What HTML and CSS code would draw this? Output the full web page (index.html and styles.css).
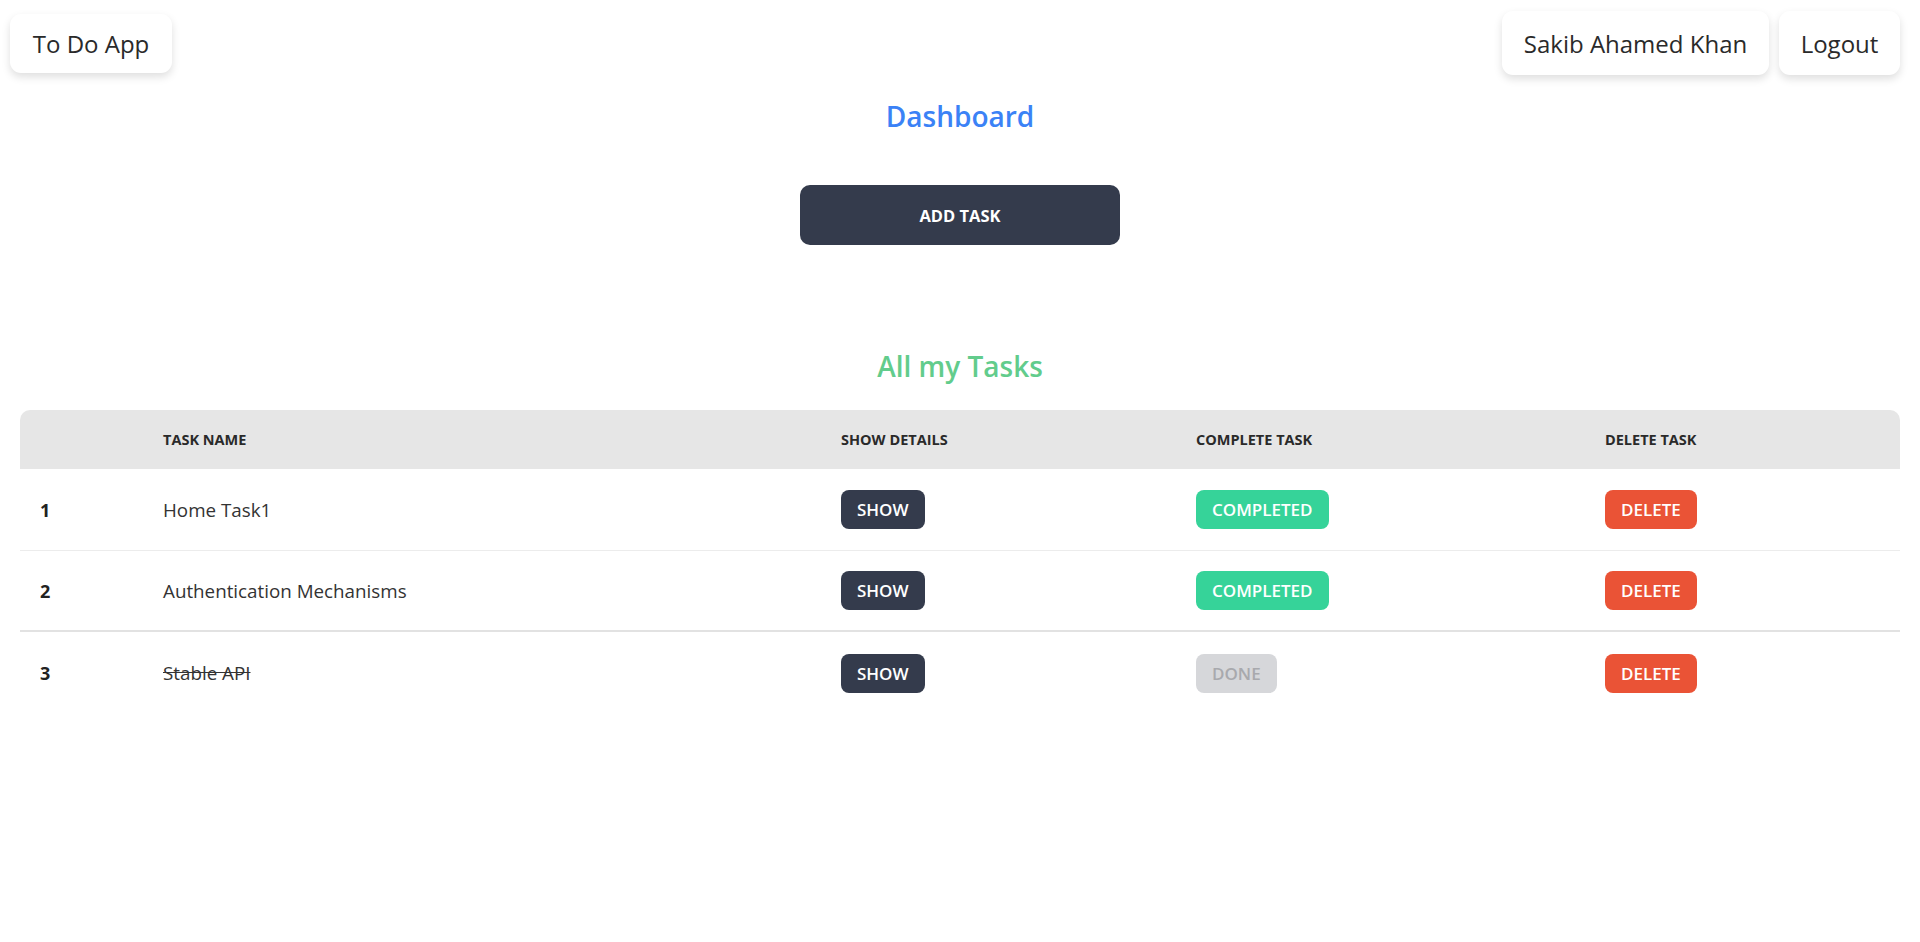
FILE: index.html
```html
<!DOCTYPE html>
<html lang="en">
<head>
<meta charset="utf-8">
<title>To Do App</title>
<link rel="stylesheet" href="styles.css">
</head>
<body>
<header class="navbar">
  <a class="nav-card brand">To Do App</a>
  <div class="nav-right">
    <a class="nav-card user">Sakib Ahamed Khan</a>
    <a class="nav-card">Logout</a>
  </div>
</header>
<main>
  <h1 class="title-dashboard">Dashboard</h1>
  <div class="add-wrap"><button class="btn-add">ADD TASK</button></div>
  <h2 class="title-tasks">All my Tasks</h2>
  <table class="tasks">
    <colgroup>
      <col class="c1"><col class="c2"><col class="c3"><col class="c4"><col class="c5">
    </colgroup>
    <thead>
      <tr><th></th><th>Task Name</th><th>Show Details</th><th>Complete Task</th><th>Delete Task</th></tr>
    </thead>
    <tbody>
      <tr class="row-a">
        <td class="num">1</td><td class="name">Home Task1</td>
        <td><button class="btn btn-dark">SHOW</button></td>
        <td><button class="btn btn-green">COMPLETED</button></td>
        <td><button class="btn btn-red">DELETE</button></td>
      </tr>
      <tr class="row-b">
        <td class="num">2</td><td class="name">Authentication Mechanisms</td>
        <td><button class="btn btn-dark">SHOW</button></td>
        <td><button class="btn btn-green">COMPLETED</button></td>
        <td><button class="btn btn-red">DELETE</button></td>
      </tr>
      <tr class="row-c">
        <td class="num">3</td><td class="name done">Stable API</td>
        <td><button class="btn btn-dark">SHOW</button></td>
        <td><button class="btn btn-disabled">DONE</button></td>
        <td><button class="btn btn-red">DELETE</button></td>
      </tr>
    </tbody>
  </table>
</main>
</body>
</html>
```
FILE: styles.css
```css
* { box-sizing: border-box; }
body {
  margin: 0;
  background: #ffffff;
  font-family: "Open Sans", "Noto Sans", sans-serif;
  color: #2a2a2a;
}
.navbar {
  display: flex;
  justify-content: space-between;
  align-items: flex-start;
  padding: 11px 20px 0 10px;
}
.nav-right { display: flex; gap: 10px; }
.nav-card {
  display: flex;
  align-items: center;
  justify-content: center;
  height: 64px;
  padding: 0 12px;
  background: #fff;
  border-radius: 11px;
  box-shadow: 0 4px 9px rgba(0,0,0,0.13);
  font-size: 24px;
  font-weight: 500;
  color: #2a2a2a;
  white-space: nowrap;
}
.nav-card.brand {
  margin-top: 3px;
  height: 59px;
  width: 162px;
}
.nav-card.user { width: 267px; }
.nav-card:last-child { width: 121px; }
.title-dashboard {
  margin: 21px 0 0;
  height: 40px;
  line-height: 40px;
  text-align: center;
  font-size: 28px;
  font-weight: 600;
  color: #3b82f6;
}
.add-wrap { display: flex; justify-content: center; margin-top: 49px; }
.btn-add {
  width: 320px;
  height: 60px;
  border: 0;
  border-radius: 10px;
  background: #343b4c;
  color: #fff;
  font-family: inherit;
  font-size: 16.5px;
  font-weight: 700;
}
.title-tasks {
  margin: 101px 0 0;
  height: 40px;
  line-height: 40px;
  text-align: center;
  font-size: 28px;
  font-weight: 600;
  color: #62cc8c;
}
.tasks {
  margin: 24px 20px 0 20px;
  width: 1880px;
  table-layout: fixed;
  border-collapse: separate;
  border-spacing: 0;
}
.c1 { width: 123px; }
.c2 { width: 678px; }
.c3 { width: 355px; }
.c4 { width: 409px; }
.c5 { width: 315px; }
.tasks th {
  height: 59px;
  padding: 0 20px;
  background: #e6e6e6;
  text-align: left;
  text-transform: uppercase;
  font-size: 14.5px;
  font-weight: 700;
  color: #2a2a2a;
}
.tasks th:first-child { border-top-left-radius: 10px; }
.tasks th:last-child { border-top-right-radius: 10px; }
.tasks td {
  padding: 0 20px;
  vertical-align: middle;
}
.row-a td { height: 82px; border-bottom: 1px solid #ececec; }
.row-b td { height: 81px; border-bottom: 2px solid #e2e2e2; }
.row-c td { height: 82px; }
.num { font-weight: 700; font-size: 18px; color: #222; }
.name { font-size: 18.8px; color: #333; }
.name.done { text-decoration: line-through; }
.btn {
  height: 39px;
  padding: 0 16px;
  border: 0;
  border-radius: 8px;
  font-family: inherit;
  font-size: 17px;
  font-weight: 600;
  color: #fff;
}
.btn-dark { background: #343b4c; }
.btn-green { background: #36d399; }
.btn-red { background: #ea5336; }
.btn-disabled { background: #d6d7da; color: #a8a9ad; }
```
